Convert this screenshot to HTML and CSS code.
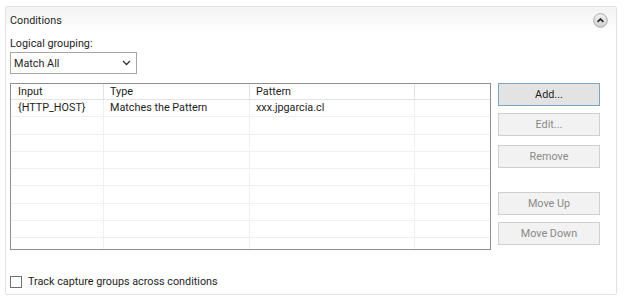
FILE: index.html
```html
<!DOCTYPE html>
<html lang="en">
<head>
  <meta charset="UTF-8" />
  <title>Conditions</title>
  <link rel="stylesheet" href="styles.css">
</head>
<body>
<div class="panel">
  <!-- HEADER -->
  <div class="panel-head">
    <span>Conditions</span>
    <svg class="collapse" width="15" height="15" viewBox="0 0 15 15">
      <defs>
        <linearGradient id="cg" x1="0" y1="0" x2="0" y2="1">
          <stop offset="0" stop-color="#f4f4f4"/>
          <stop offset="1" stop-color="#cfcfcf"/>
        </linearGradient>
      </defs>
      <circle cx="7.5" cy="7.5" r="6.8" fill="url(#cg)" stroke="#a9a9a9" stroke-width="1"/>
      <path d="M4.6 8.9 L7.5 6 L10.4 8.9" fill="none" stroke="#333" stroke-width="1.8"/>
    </svg>
  </div>

  <div class="panel-body">
    <div class="label">Logical grouping:</div>
    <div class="select">
      <span>Match All</span>
      <svg width="9" height="6" viewBox="0 0 9 6"><path d="M1 1 L4.5 4.5 L8 1" fill="none" stroke="#333" stroke-width="1.3"/></svg>
    </div>

    <div class="main">
      <div class="grid" id="grid">
        <div class="row head">
          <div class="cell">Input</div>
          <div class="cell">Type</div>
          <div class="cell">Pattern</div>
          <div class="cell"></div>
        </div>
        <div class="row">
          <div class="cell">{HTTP_HOST}</div>
          <div class="cell">Matches the Pattern</div>
          <div class="cell">xxx.jpgarcia.cl</div>
          <div class="cell"></div>
        </div>
      </div>

      <div class="buttons">
        <button class="btn primary">Add...</button>
        <button class="btn">Edit...</button>
        <button class="btn remove">Remove</button>
        <button class="btn spaced">Move Up</button>
        <button class="btn">Move Down</button>
      </div>
    </div>

    <label class="check">
      <span class="box"></span>
      Track capture groups across conditions
    </label>
  </div>
</div>

<script>
  // fill the empty rows of the list
  const grid = document.getElementById('grid');
  for (let i = 0; i < 8; i++) {
    const row = document.createElement('div');
    row.className = 'row';
    row.innerHTML = '<div class="cell"></div>'.repeat(4);
    grid.appendChild(row);
  }
</script>
</body>
</html>
```

FILE: styles.css
```css
body {
  margin: 0;
  background: #fff;
  color: #1e1e1e;
  font-family: Roboto, "Open Sans", sans-serif;
  font-size: 10.8px;
}
.panel {
  margin: 6px 0 0 5px;
  width: 612px;
  height: 289px;
  box-sizing: border-box;
  border: 1px solid #e2e2e2;
  border-radius: 2px;
  overflow: hidden;
}
.panel-head {
  height: 26px;
  display: flex;
  justify-content: space-between;
  align-items: center;
  padding: 0 8px 0 4px;
  background: linear-gradient(#f3f3f3, #fff);
}
.collapse { display: block; }
.panel-body {
  padding: 2px 0 0 4px;
}
.label {
  height: 17px;
  line-height: 17px;
}
.select {
  width: 127px;
  height: 22px;
  box-sizing: border-box;
  border: 1px solid #a6a6a6;
  display: flex;
  align-items: center;
  justify-content: space-between;
  padding: 0 5px 0 3px;
}
.main {
  margin-top: 9px;
  display: flex;
  gap: 7px;
}
.grid {
  width: 481px;
  height: 167px;
  box-sizing: border-box;
  border: 1px solid #8f8f8f;
  overflow: hidden;
}
.row {
  display: grid;
  grid-template-columns: 93px 146px 165px 1fr;
  height: 17.25px;
  box-sizing: border-box;
  border-bottom: 1px solid #f0f0f0;
}
.row.head {
  height: 16px;
  border-bottom: 1px solid #e3e3e3;
}
.cell {
  padding-left: 6px;
  line-height: 16px;
  border-right: 1px solid #f0f0f0;
  white-space: nowrap;
  overflow: hidden;
}
.cell:first-child { padding-left: 7px; }
.head .cell { border-right-color: #e3e3e3; }
.cell:last-child { border-right: none; }
.buttons {
  display: flex;
  flex-direction: column;
  gap: 7px;
}
.btn {
  width: 102px;
  height: 23px;
  margin: 0;
  padding: 0;
  font: inherit;
  color: #8a8a8a;
  background: #f2f2f2;
  border: 1px solid #cfcfcf;
}
.btn.primary {
  color: #1e1e1e;
  background: #e3e3e3;
  border-color: #7ea4c4;
}
.btn.remove { margin-top: 2px; }
.btn.spaced { margin-top: 17px; }
.check {
  margin-top: 25px;
  display: flex;
  align-items: center;
  gap: 6px;
}
.box {
  width: 12px;
  height: 12px;
  box-sizing: border-box;
  border: 1px solid #6e6e6e;
  background: #fff;
}
```
